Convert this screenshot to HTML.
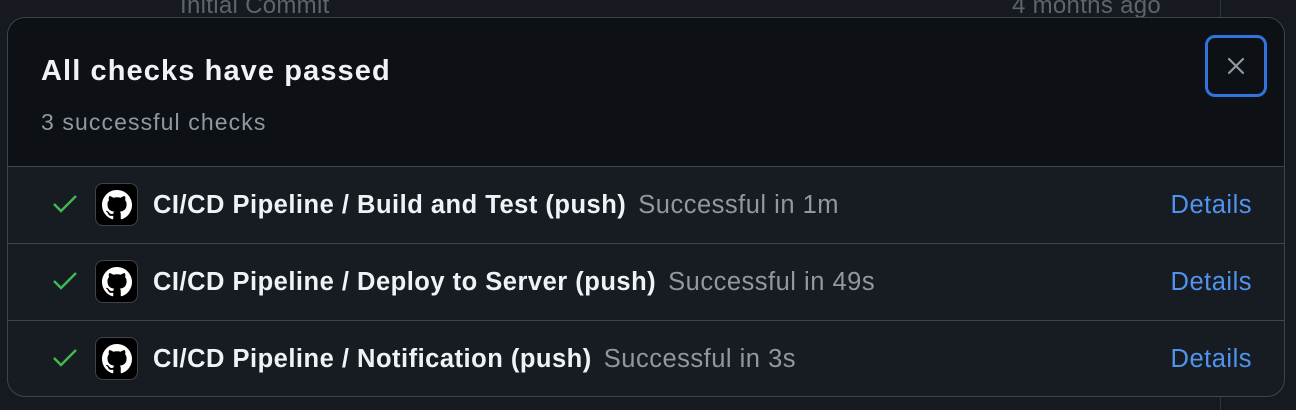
<!DOCTYPE html>
<html><head><style>
*{margin:0;padding:0;box-sizing:border-box}
body{width:1296px;height:410px;background:#161a20;font-family:"Liberation Sans",sans-serif;position:relative;overflow:hidden}
.bg{position:absolute;color:#5d646d;font-size:24px;letter-spacing:0.3px}
.modal{position:absolute;left:7px;top:17px;width:1278px;height:380px;border:1px solid #3d444d;border-radius:18px;background:#171b22;overflow:hidden}
.hdr{height:149px;background:#0d1015;border-bottom:1px solid #3d444d;position:relative}
.hdr h1{position:absolute;left:33px;top:37px;font-size:29px;letter-spacing:1.1px;color:#f0f3f6;font-weight:bold}
.hdr p{position:absolute;left:33px;top:91px;font-size:23px;letter-spacing:1.1px;color:#9198a1}
.close{position:absolute;left:1197px;top:17px;width:62px;height:62px;border:3px solid #3274de;border-radius:10px}
.row{height:77px;border-bottom:1px solid #3d444d;position:relative}
.row:last-child{border-bottom:none}
.chk{position:absolute;left:44px;top:27px}
.ic{position:absolute;left:87px;top:16px;width:43px;height:43px;background:#000;border:1px solid #3d444d;border-radius:8px}
.ic svg{position:absolute;left:6px;top:6px}
.t{position:absolute;left:145px;top:24px;font-size:25.5px;letter-spacing:0.5px;white-space:nowrap}
.t b{color:#f0f3f6}
.t span{color:#9198a1;margin-left:12px}
.d{position:absolute;right:32px;top:24px;font-size:25.5px;letter-spacing:0.5px;color:#4f94ef}
</style></head><body>
<div class="bg" style="left:180px;top:-8px">Initial Commit</div>
<div class="bg" style="left:1012px;top:-8px">4 months ago</div>
<div style="position:absolute;left:1220px;top:0;width:1px;height:410px;background:#30363d"></div>
<div class="modal">
<div class="hdr"><h1>All checks have passed</h1><p>3 successful checks</p>
<div class="close"><svg width="56" height="56" viewBox="0 0 56 56" style="position:absolute;left:0;top:0"><path d="M21 21L35 35M35 21L21 35" stroke="#9198a1" stroke-width="2.2" stroke-linecap="round"/></svg></div></div>
<div class="row">
<svg class="chk" width="26" height="20" viewBox="0 0 26 20"><path d="M2 10l7 7L24 2" stroke="#3fb950" stroke-width="2.4" fill="none"/></svg>
<div class="ic"><svg width="30" height="30" viewBox="0 0 16 16"><path fill="#fff" d="M8 0C3.58 0 0 3.58 0 8c0 3.54 2.29 6.53 5.47 7.59.4.07.55-.17.55-.38 0-.19-.01-.82-.01-1.49-2.01.37-2.53-.49-2.69-.94-.09-.23-.48-.94-.82-1.13-.28-.15-.68-.52-.01-.53.63-.01 1.08.58 1.23.82.72 1.21 1.87.87 2.33.66.07-.52.28-.87.51-1.07-1.78-.2-3.64-.89-3.64-3.95 0-.87.31-1.59.82-2.15-.08-.2-.36-1.02.08-2.12 0 0 .67-.21 2.2.82.64-.18 1.32-.27 2-.27.68 0 1.36.09 2 .27 1.53-1.04 2.2-.82 2.2-.82.44 1.1.16 1.92.08 2.12.51.56.82 1.27.82 2.15 0 3.07-1.87 3.75-3.65 3.95.29.25.54.73.54 1.48 0 1.07-.01 1.93-.01 2.2 0 .21.15.46.55.38A8.013 8.013 0 0016 8c0-4.42-3.58-8-8-8z"/></svg></div>
<div class="t"><b>CI/CD Pipeline / Build and Test (push)</b><span>Successful in 1m</span></div><div class="d">Details</div></div>
<div class="row">
<svg class="chk" width="26" height="20" viewBox="0 0 26 20"><path d="M2 10l7 7L24 2" stroke="#3fb950" stroke-width="2.4" fill="none"/></svg>
<div class="ic"><svg width="30" height="30" viewBox="0 0 16 16"><path fill="#fff" d="M8 0C3.58 0 0 3.58 0 8c0 3.54 2.29 6.53 5.47 7.59.4.07.55-.17.55-.38 0-.19-.01-.82-.01-1.49-2.01.37-2.53-.49-2.69-.94-.09-.23-.48-.94-.82-1.13-.28-.15-.68-.52-.01-.53.63-.01 1.08.58 1.23.82.72 1.21 1.87.87 2.33.66.07-.52.28-.87.51-1.07-1.78-.2-3.64-.89-3.64-3.95 0-.87.31-1.59.82-2.15-.08-.2-.36-1.02.08-2.12 0 0 .67-.21 2.2.82.64-.18 1.32-.27 2-.27.68 0 1.36.09 2 .27 1.53-1.04 2.2-.82 2.2-.82.44 1.1.16 1.92.08 2.12.51.56.82 1.27.82 2.15 0 3.07-1.87 3.75-3.65 3.95.29.25.54.73.54 1.48 0 1.07-.01 1.93-.01 2.2 0 .21.15.46.55.38A8.013 8.013 0 0016 8c0-4.42-3.58-8-8-8z"/></svg></div>
<div class="t"><b>CI/CD Pipeline / Deploy to Server (push)</b><span>Successful in 49s</span></div><div class="d">Details</div></div>
<div class="row">
<svg class="chk" width="26" height="20" viewBox="0 0 26 20"><path d="M2 10l7 7L24 2" stroke="#3fb950" stroke-width="2.4" fill="none"/></svg>
<div class="ic"><svg width="30" height="30" viewBox="0 0 16 16"><path fill="#fff" d="M8 0C3.58 0 0 3.58 0 8c0 3.54 2.29 6.53 5.47 7.59.4.07.55-.17.55-.38 0-.19-.01-.82-.01-1.49-2.01.37-2.53-.49-2.69-.94-.09-.23-.48-.94-.82-1.13-.28-.15-.68-.52-.01-.53.63-.01 1.08.58 1.23.82.72 1.21 1.87.87 2.33.66.07-.52.28-.87.51-1.07-1.78-.2-3.64-.89-3.64-3.95 0-.87.31-1.59.82-2.15-.08-.2-.36-1.02.08-2.12 0 0 .67-.21 2.2.82.64-.18 1.32-.27 2-.27.68 0 1.36.09 2 .27 1.53-1.04 2.2-.82 2.2-.82.44 1.1.16 1.92.08 2.12.51.56.82 1.27.82 2.15 0 3.07-1.87 3.75-3.65 3.95.29.25.54.73.54 1.48 0 1.07-.01 1.93-.01 2.2 0 .21.15.46.55.38A8.013 8.013 0 0016 8c0-4.42-3.58-8-8-8z"/></svg></div>
<div class="t"><b>CI/CD Pipeline / Notification (push)</b><span>Successful in 3s</span></div><div class="d">Details</div></div>
</div>
</body></html>
